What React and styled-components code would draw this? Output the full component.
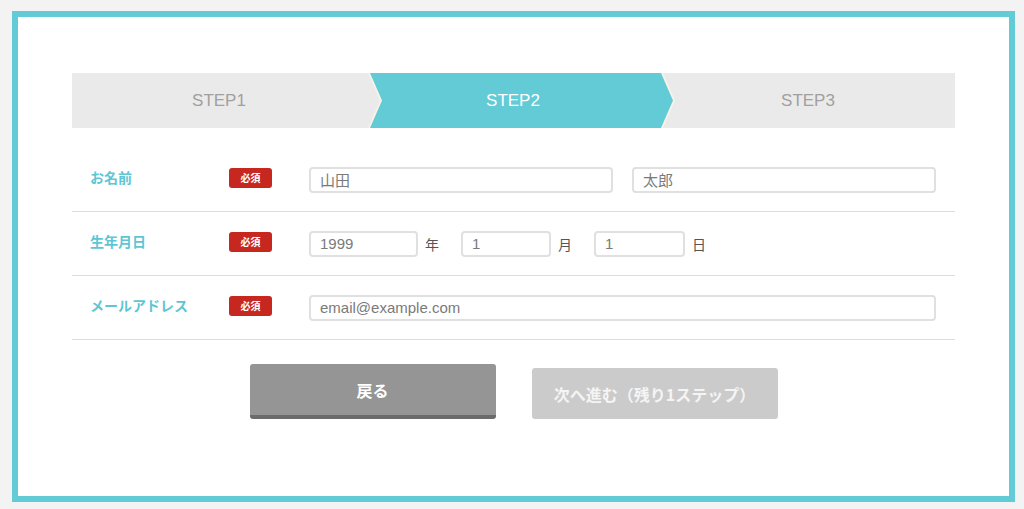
import React from 'react'
import styled, { createGlobalStyle } from 'styled-components'

const GlobalStyle = createGlobalStyle`
  html, body {
    margin: 0;
    padding: 0;
    background: #f3f3f3;
  }
  body {
    padding: 11px 9px 0 12px;
    font-family: "Noto Sans CJK JP", "Noto Sans", sans-serif;
  }
  * { box-sizing: border-box; }
`

const Frame = styled.div`
  width: 1003px;
  height: 491px;
  border: 6px solid #62cbd6;
  background: #fff;
  padding: 56px 54px 0 54px;
`

const StepBar = styled.div`
  display: flex;
  height: 55px;
  background: #f8f2e9;
`

const Step = styled.div`
  flex: ${p => (p.$last ? '1 1 0' : `0 0 ${p.$w}px`)};
  margin-left: ${p => p.$ml || 0}px;
  padding-right: ${p => p.$pr || 0}px;
  display: flex;
  align-items: center;
  justify-content: center;
  background: ${p => (p.$active ? '#62cbd6' : '#eaeaea')};
  color: ${p => (p.$active ? '#ffffff' : '#a0a0a0')};
  font-family: "Liberation Sans", Arial, sans-serif;
  font-size: 17px;
  clip-path: ${p => p.$clip};
`

const Form = styled.div`
  margin-top: 20px;
`

const Row = styled.div`
  display: flex;
  align-items: center;
  height: 64px;
  padding: 0 19px 0 18px;
  border-bottom: 1px solid #dcdcdc;
`

const Label = styled.div`
  width: 139px;
  padding-bottom: 5px;
  color: #5ec6d3;
  font-weight: 700;
  font-size: 14px;
`

const BadgeCell = styled.div`
  width: 80px;
  display: flex;
  padding-bottom: 4px;
`

const Badge = styled.span`
  width: 43px;
  height: 20px;
  border-radius: 3px;
  background: #c6281f;
  color: #fff;
  font-size: 10px;
  font-weight: 700;
  display: flex;
  align-items: center;
  justify-content: center;
`

const Fields = styled.div`
  flex: 1;
  display: flex;
  align-items: center;
  gap: ${p => p.$gap || 19}px;
`

const Input = styled.div`
  flex: ${p => (p.$w ? `0 0 ${p.$w}px` : '1 1 0')};
  height: 26px;
  border: 2px solid #e0e0e0;
  border-radius: 4px;
  background: #fff;
  padding: 0 9px;
  display: flex;
  align-items: center;
  color: #7a7a7a;
  font-family: "Liberation Sans", "Noto Sans CJK JP", sans-serif;
  font-size: 15px;
`

const DateGroup = styled.div`
  display: flex;
  align-items: center;
  gap: 7px;
`

const Unit = styled.span`
  color: #555;
  font-size: 14px;
`

const Buttons = styled.div`
  display: flex;
  justify-content: center;
  align-items: flex-end;
  gap: 36px;
  margin-top: 24px;
`

const Button = styled.div`
  width: 246px;
  height: ${p => (p.$primary ? 55 : 51)}px;
  border-radius: 3px;
  background: ${p => (p.$primary ? '#959595' : '#cbcbcb')};
  border-bottom: ${p => (p.$primary ? '4px solid #6b6b6b' : 'none')};
  color: ${p => (p.$primary ? '#ffffff' : '#f4f4f4')};
  font-weight: 700;
  font-size: 16px;
  display: flex;
  align-items: center;
  justify-content: center;
`

const firstClip = 'polygon(0 0, calc(100% - 12px) 0, 100% 50%, calc(100% - 12px) 100%, 0 100%)'
const midClip = 'polygon(0 0, calc(100% - 12px) 0, 100% 50%, calc(100% - 12px) 100%, 0 100%, 12px 50%)'
const lastClip = 'polygon(0 0, 100% 0, 100% 100%, 0 100%, 12px 50%)'

export default function App() {
  return (
    <>
      <GlobalStyle />
      <Frame>
        <StepBar>
          <Step $w={308} $pr={14} $clip={firstClip}>STEP1</Step>
          <Step $w={303} $ml={-10} $pr={17} $clip={midClip} $active>STEP2</Step>
          <Step $last $ml={-10} $pr={2} $clip={lastClip}>STEP3</Step>
        </StepBar>
        <Form>
          <Row>
            <Label>お名前</Label>
            <BadgeCell><Badge>必須</Badge></BadgeCell>
            <Fields>
              <Input>山田</Input>
              <Input>太郎</Input>
            </Fields>
          </Row>
          <Row>
            <Label>生年月日</Label>
            <BadgeCell><Badge>必須</Badge></BadgeCell>
            <Fields $gap={22}>
              <DateGroup><Input $w={109}>1999</Input><Unit>年</Unit></DateGroup>
              <DateGroup><Input $w={90}>1</Input><Unit>月</Unit></DateGroup>
              <DateGroup><Input $w={91}>1</Input><Unit>日</Unit></DateGroup>
            </Fields>
          </Row>
          <Row>
            <Label>メールアドレス</Label>
            <BadgeCell><Badge>必須</Badge></BadgeCell>
            <Fields>
              <Input>email@example.com</Input>
            </Fields>
          </Row>
        </Form>
        <Buttons>
          <Button $primary>戻る</Button>
          <Button>次へ進む（残り1ステップ）</Button>
        </Buttons>
      </Frame>
    </>
  )
}
